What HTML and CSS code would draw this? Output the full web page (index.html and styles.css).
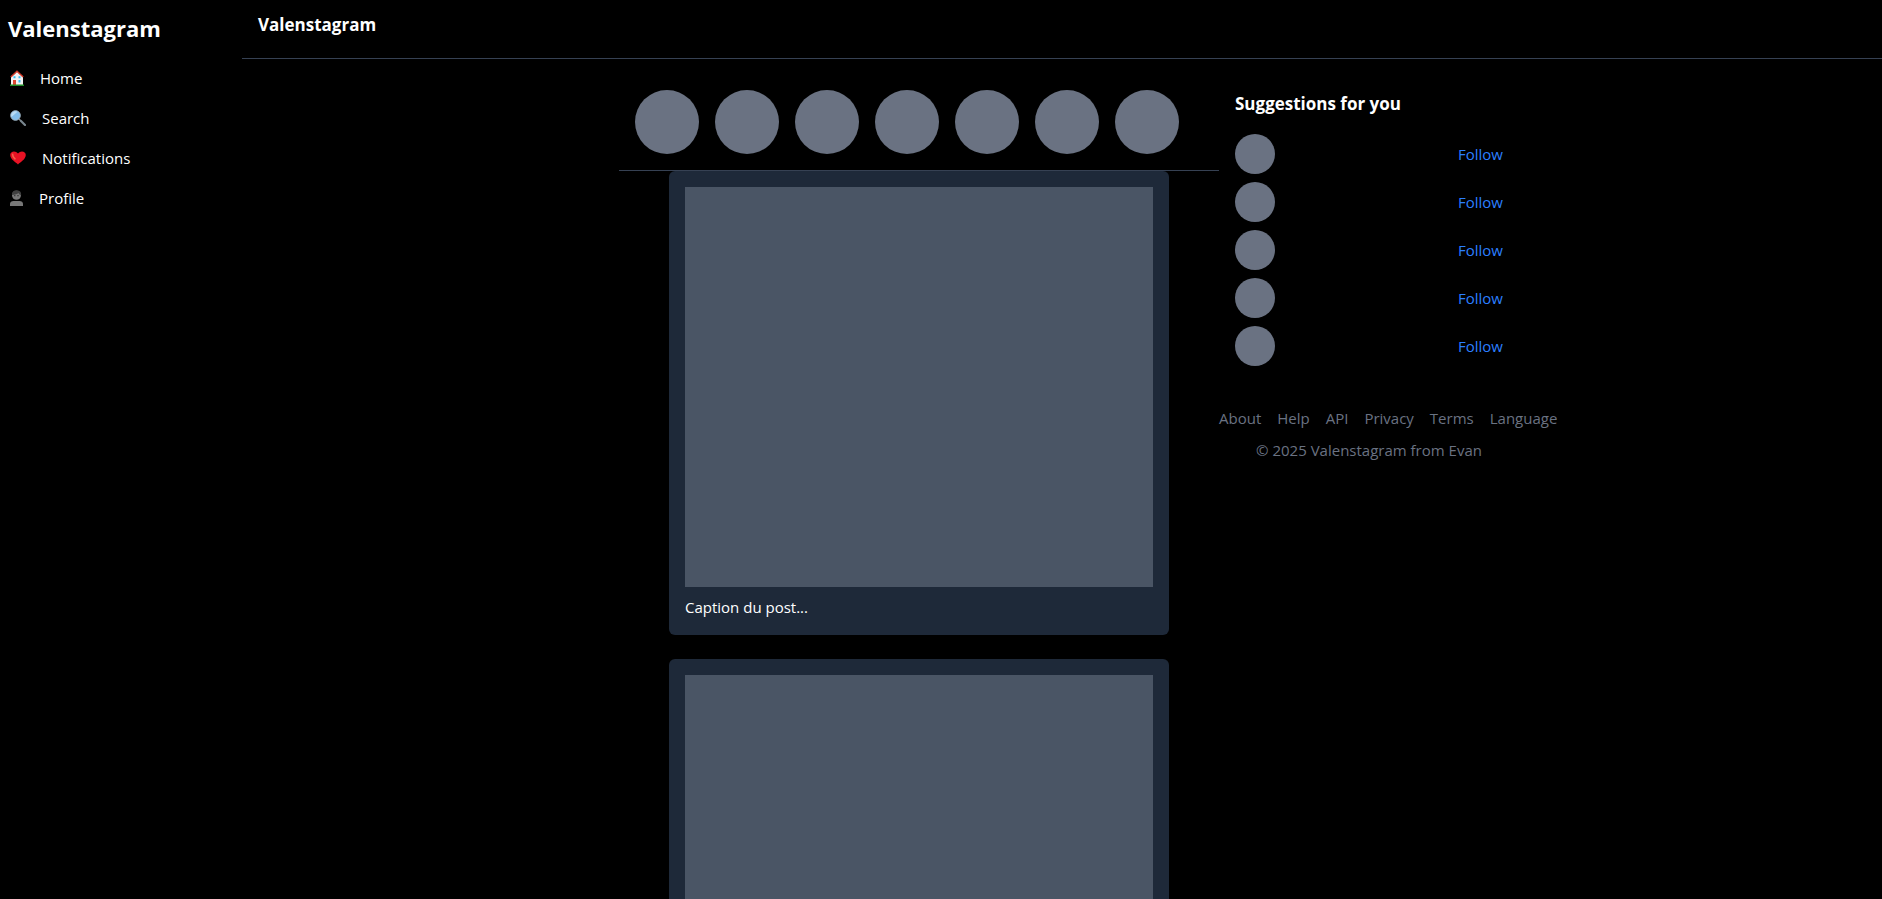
FILE: index.html
```html
<!DOCTYPE html>
<html lang="en">
<head>
<meta charset="utf-8">
<title>Valenstagram</title>
<link rel="stylesheet" href="styles.css">
</head>
<body>
<div class="app">
  <nav class="sidebar">
    <h1 class="brand">Valenstagram</h1>
    <ul class="menu">
      <li><a class="menu-link" href="#home">
        <svg width="14" height="16" viewBox="0 0 14 16"><path d="M1 7 7 1.5 13 7V15H1Z" fill="#f2f2f2"/><path d="M.8 7 7 1.2 13.200 7" fill="none" stroke="#d13a28" stroke-width="1.500"/><path d="M3.500 6.200h2v2h-2zM8.500 6.200h2v2h-2zM8.500 10h2v2.500h-2z" fill="#35bdf0"/><path d="M3 10h3v5H3z" fill="#dc4630"/><path d="M0 14.500h14V16H0z" fill="#1c8a25"/></svg>
        <span>Home</span></a></li>
      <li><a class="menu-link" href="#search">
        <svg width="16" height="16" viewBox="0 0 16 16"><path d="M9 9 11 11" stroke="#8d989f" stroke-width="1.500"/><path d="M11 11 15 15" stroke="#79868e" stroke-width="2.200" stroke-linecap="round"/><circle cx="5.500" cy="5.500" r="4.800" fill="#83beec" stroke="#a2b8c8"/><path d="M1.500 7A4.200 4.200 0 0 1 7.500 1.800Z" fill="#b9dcf6"/></svg>
        <span>Search</span></a></li>
      <li><a class="menu-link" href="#notifications">
        <svg width="16" height="16" viewBox="0 0 16 16"><path d="M8 14.500C6 12.200.2 9.500.2 5 .2 1.200 5.500 0 8 3.600 10.500 0 15.800 1.200 15.800 5 15.800 9.500 10 12.200 8 14.500Z" fill="#e81224"/><path d="M2.600 4.200C2.400 6 3.600 7.600 5 8.800" fill="none" stroke="#f4604b" stroke-width="1.600" stroke-linecap="round"/></svg>
        <span>Notifications</span></a></li>
      <li><a class="menu-link" href="#profile">
        <svg width="13" height="16" viewBox="0 0 13 16"><circle cx="6.500" cy="5.200" r="4.500" fill="#777"/><path d="M2 5C1.500 1.500 4.500-.2 7 .2 10.500.5 11.600 3 11 5.500 10 5 9 4.200 8.500 3 6.500 4.800 4 4.600 2 5Z" fill="#3f3f3f"/><path d="M4.300 5h1v1.200h-1zM7.500 5h1v1.200h-1z" fill="#222"/><path d="M0 16V14C0 12 1.500 11 3.500 11H9.500C11.500 11 13 12 13 14V16Z" fill="#777"/></svg>
        <span>Profile</span></a></li>
    </ul>
  </nav>
  <div class="page">
    <header class="topbar"><h2 class="heading">Valenstagram</h2></header>
    <div class="content">
      <main class="feed">
        <div class="stories">
          <span class="story"></span><span class="story"></span><span class="story"></span><span class="story"></span><span class="story"></span><span class="story"></span><span class="story"></span>
        </div>
        <div class="posts">
          <article class="post"><div class="photo"></div><p class="caption">Caption du post...</p></article>
          <article class="post"><div class="photo"></div></article>
        </div>
      </main>
      <aside class="aside">
        <section class="suggestions">
          <h2 class="heading">Suggestions for you</h2>
          <ul class="people">
            <li class="person"><span class="avatar"></span><button class="follow" type="button">Follow</button></li>
            <li class="person"><span class="avatar"></span><button class="follow" type="button">Follow</button></li>
            <li class="person"><span class="avatar"></span><button class="follow" type="button">Follow</button></li>
            <li class="person"><span class="avatar"></span><button class="follow" type="button">Follow</button></li>
            <li class="person"><span class="avatar"></span><button class="follow" type="button">Follow</button></li>
          </ul>
        </section>
        <footer class="footer">
          <div class="links"><a href="#about">About</a><a href="#help">Help</a><a href="#api">API</a><a href="#privacy">Privacy</a><a href="#terms">Terms</a><a href="#language">Language</a></div>
          <p class="copyright">© 2025 Valenstagram from Evan</p>
        </footer>
      </aside>
    </div>
  </div>
</div>
</body>
</html>
```
FILE: styles.css
```css
* { box-sizing: border-box; margin: 0; padding: 0; }
body {
  background: #000;
  color: #fff;
  font: 15px/24px "Segoe UI", "Open Sans", "Noto Sans", sans-serif;
}
ul { list-style: none; }
a { color: inherit; text-decoration: none; }
.app { display: flex; height: 100vh; overflow: hidden; }
.sidebar { width: 242px; flex-shrink: 0; padding-top: 12px; }
.brand { padding-left: 8px; margin-bottom: 14px; font-size: 22px; line-height: 32px; font-weight: 700; }
.menu-link { display: flex; align-items: center; gap: 16px; padding: 8px 10px; }
.page { flex: 1; min-width: 0; }
.topbar { padding: 11px 16px 19px; border-bottom: 1px solid #364153; }
.heading { font-size: 17px; line-height: 28px; font-weight: 700; }
.content { display: flex; justify-content: center; padding: 15px 0 0 14px; }
.feed { width: 600px; }
.stories { display: flex; gap: 16px; padding: 16px; border-bottom: 1px solid #364153; }
.story { width: 64px; height: 64px; border-radius: 50%; background: #6a7282; }
.posts { display: flex; flex-direction: column; align-items: center; gap: 24px; }
.post { width: 500px; padding: 16px; border-radius: 6px; background: #1e2939; }
.photo { height: 400px; background: #4a5565; }
.caption { margin-top: 8px; }
.aside { width: 300px; }
.suggestions { padding: 16px; }
.people { display: grid; gap: 8px; margin-top: 16px; }
.person { display: flex; align-items: center; justify-content: space-between; }
.avatar { width: 40px; height: 40px; border-radius: 50%; background: #6a7282; }
.follow { border: 0; background: none; color: #2b7fff; font: inherit; cursor: pointer; }
.footer { margin-top: 24px; color: #6a7282; }
.links { display: flex; gap: 16px; }
.copyright { margin-top: 8px; text-align: center; }
```
